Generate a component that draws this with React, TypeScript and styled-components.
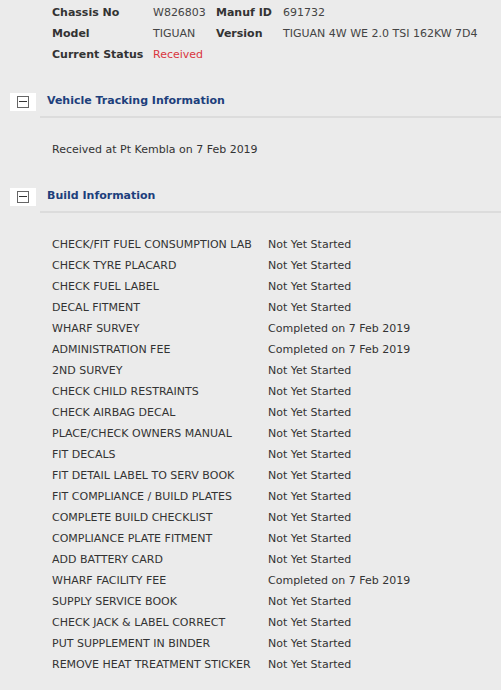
import React, { FC } from 'react';
import styled, { createGlobalStyle } from 'styled-components';

const GlobalStyle = createGlobalStyle`
  html, body {
    margin: 0;
    padding: 0;
    background: #ebebeb;
  }
  body {
    font-family: "DejaVu Sans", Verdana, sans-serif;
    font-size: 11px;
    color: #333;
  }
`;

const Page = styled.div`
  width: 501px;
  min-height: 690px;
  background: #ebebeb;
  padding-top: 2px;
  box-sizing: border-box;
`;

const SummaryGrid = styled.div`
  display: grid;
  grid-template-columns: 101px 63px 67px auto;
  grid-auto-rows: 21px;
  align-items: center;
  padding-left: 52px;
`;

const Label = styled.span`
  font-weight: bold;
  color: #333;
`;

const Value = styled.span<{ $alert?: boolean }>`
  color: ${({ $alert }) => ($alert ? '#d9363e' : '#444')};
  white-space: nowrap;
`;

const SectionHeader = styled.div<{ $gap: number }>`
  display: flex;
  align-items: stretch;
  height: 27px;
  margin-top: ${({ $gap }) => $gap}px;
`;

const ToggleCell = styled.div`
  width: 26px;
  height: 18px;
  margin-left: 10px;
  margin-top: 2px;
  background: #fff;
  display: flex;
  align-items: center;
  justify-content: center;
`;

const MinusBox = styled.span`
  width: 10px;
  height: 10px;
  border: 1px solid #666;
  position: relative;
  &::after {
    content: '';
    position: absolute;
    left: 1px;
    right: 1px;
    top: 4px;
    height: 1px;
    background: #333;
  }
`;

const TitleBar = styled.div`
  flex: 1;
  margin-left: 4px;
  border-bottom: 2px solid #dcdcdc;
  display: flex;
  align-items: center;
  padding-left: 7px;
  padding-bottom: 7px;
  font-weight: bold;
  font-size: 11px;
  color: #1d3f7c;
`;

const Paragraph = styled.p`
  margin: 25px 0 0 52px;
  line-height: 14px;
  color: #333;
`;

const TaskList = styled.div`
  display: grid;
  grid-template-columns: 216px auto;
  grid-auto-rows: 21px;
  align-items: center;
  padding-left: 52px;
  margin-top: 21px;
`;

const TaskName = styled.span`
  white-space: nowrap;
  color: #333;
`;

const TaskStatus = styled.span`
  white-space: nowrap;
  color: #333;
`;

const Section: FC<{ title: string; gap: number }> = ({ title, gap }) => (
  <SectionHeader $gap={gap}>
    <ToggleCell>
      <MinusBox />
    </ToggleCell>
    <TitleBar>{title}</TitleBar>
  </SectionHeader>
);

const done = 'Completed on 7 Feb 2019';
const todo = 'Not Yet Started';

const tasks: [string, string][] = [
  ['CHECK/FIT FUEL CONSUMPTION LAB', todo],
  ['CHECK TYRE PLACARD', todo],
  ['CHECK FUEL LABEL', todo],
  ['DECAL FITMENT', todo],
  ['WHARF SURVEY', done],
  ['ADMINISTRATION FEE', done],
  ['2ND SURVEY', todo],
  ['CHECK CHILD RESTRAINTS', todo],
  ['CHECK AIRBAG DECAL', todo],
  ['PLACE/CHECK OWNERS MANUAL', todo],
  ['FIT DECALS', todo],
  ['FIT DETAIL LABEL TO SERV BOOK', todo],
  ['FIT COMPLIANCE / BUILD PLATES', todo],
  ['COMPLETE BUILD CHECKLIST', todo],
  ['COMPLIANCE PLATE FITMENT', todo],
  ['ADD BATTERY CARD', todo],
  ['WHARF FACILITY FEE', done],
  ['SUPPLY SERVICE BOOK', todo],
  ['CHECK JACK & LABEL CORRECT', todo],
  ['PUT SUPPLEMENT IN BINDER', todo],
  ['REMOVE HEAT TREATMENT STICKER', todo],
];

const App: FC = () => (
  <Page>
    <GlobalStyle />
    <SummaryGrid>
      <Label>Chassis No</Label>
      <Value>W826803</Value>
      <Label>Manuf ID</Label>
      <Value>691732</Value>
      <Label>Model</Label>
      <Value>TIGUAN</Value>
      <Label>Version</Label>
      <Value>TIGUAN 4W WE 2.0 TSI 162KW 7D4</Value>
      <Label>Current Status</Label>
      <Value $alert>Received</Value>
    </SummaryGrid>

    <Section title="Vehicle Tracking Information" gap={26} />
    <Paragraph>Received at Pt Kembla on 7 Feb 2019</Paragraph>

    <Section title="Build Information" gap={29} />
    <TaskList>
      {tasks.map(([name, status]) => (
        <React.Fragment key={name}>
          <TaskName>{name}</TaskName>
          <TaskStatus>{status}</TaskStatus>
        </React.Fragment>
      ))}
    </TaskList>
  </Page>
);

export default App;
